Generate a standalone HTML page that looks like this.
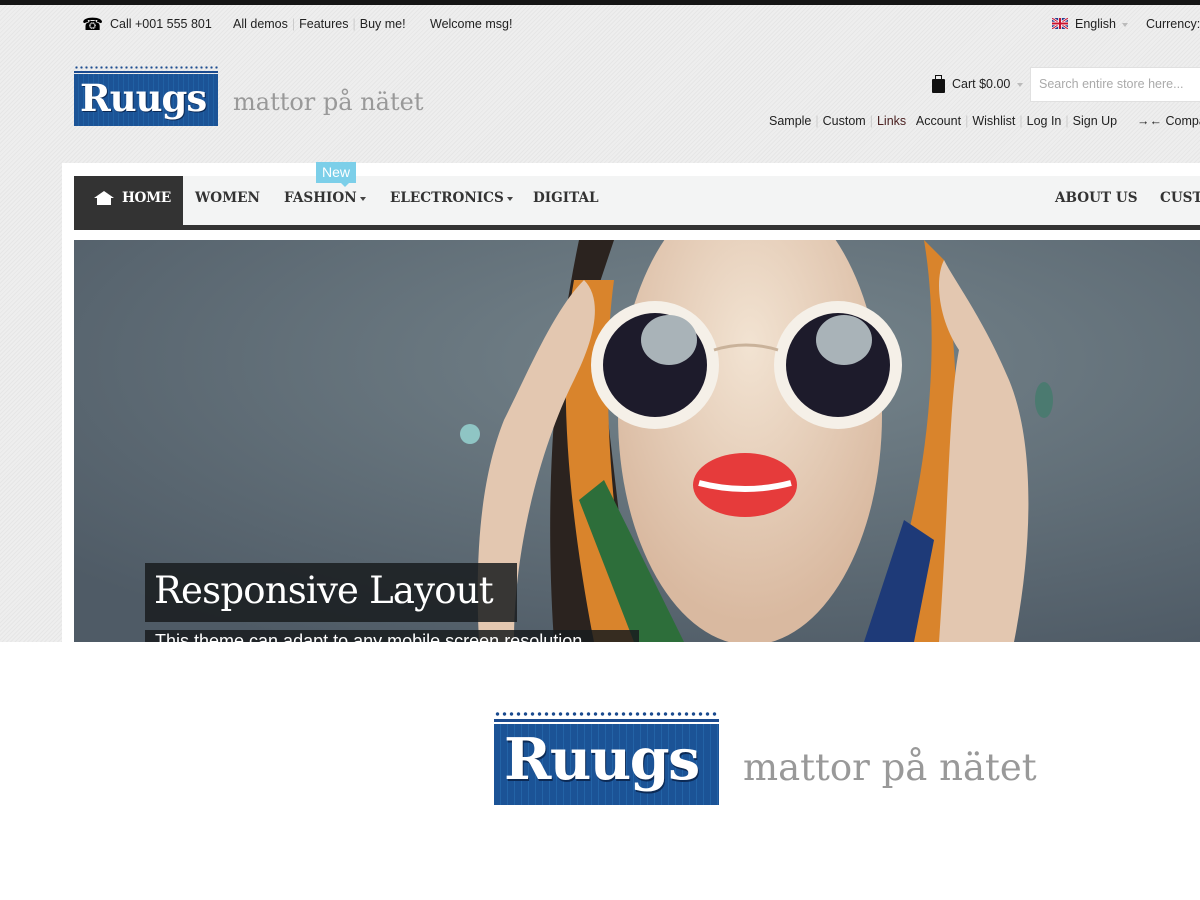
<!DOCTYPE html>
<html><head><meta charset="utf-8"><style>
*{margin:0;padding:0;box-sizing:border-box}
body{width:1200px;height:900px;overflow:hidden;background:#fff;font-family:"Liberation Sans",sans-serif;position:relative}
.a{position:absolute}
.top{left:0;top:0;width:1200px;height:642px;background:#ececec repeating-linear-gradient(135deg,#eeeeee 0 2px,#e6e6e6 2px 3px)}
.bar{left:0;top:0;width:1200px;height:5px;background:#151515}
.t{font-size:12.5px;color:#222;white-space:nowrap}
.sep{color:#ccc;margin:0 4px}
.slab{font-family:"DejaVu Serif","Liberation Serif",serif}
.nav{font-family:"DejaVu Serif",serif;font-size:13.6px;font-weight:bold;color:#333;top:190px;white-space:nowrap}
.caret{display:inline-block;border-left:3.5px solid transparent;border-right:3.5px solid transparent;border-top:4px solid #444;vertical-align:middle;margin-left:3px}
</style></head><body>
<div class="a top"></div>
<div class="a bar"></div>
<div class="a" style="left:82px;top:15px;font-size:17px">☎</div>
<div class="a t" style="left:110px;top:17px">Call +001 555 801</div>
<div class="a t" style="left:233px;top:17px">All demos<span class="sep">|</span>Features<span class="sep">|</span>Buy me!</div>
<div class="a t" style="left:430px;top:17px">Welcome msg!</div>
<svg class="a" style="left:1052px;top:18px" width="16" height="11" viewBox="0 0 16 11"><rect width="16" height="11" fill="#2a3f8f"/><path d="M0 0L16 11M16 0L0 11" stroke="#fff" stroke-width="2.5"/><path d="M0 0L16 11M16 0L0 11" stroke="#c8102e" stroke-width="1"/><path d="M8 0V11M0 5.5H16" stroke="#fff" stroke-width="3.5"/><path d="M8 0V11M0 5.5H16" stroke="#c8102e" stroke-width="2"/></svg>
<div class="a t" style="left:1075px;top:17px">English <span class="caret" style="border-top-color:#bbb"></span></div>
<div class="a t" style="left:1146px;top:17px">Currency:</div>
<div class="a" style="left:74px;top:66px;width:144px;height:3px;background:radial-gradient(circle,#1b4b8f 1px,transparent 1.3px) 0 0/5px 3px"></div>
<div class="a" style="left:74px;top:71px;width:144px;height:2px;background:#1b4b8f"></div>
<div class="a slab" style="left:74px;top:74px;width:144px;height:52px;background:#1a4f91 repeating-linear-gradient(90deg,#1b5396 0 4px,#2060a3 4px 5px);color:#fff;font-size:37px;font-weight:bold;line-height:48px;padding-left:6px;letter-spacing:-1px;text-shadow:1px 1px 0 #0c2a55">Ruugs</div>
<div class="a slab" style="left:233px;top:88px;font-size:24px;color:#999">mattor på nätet</div>
<div class="a" style="left:932px;top:79px;width:13px;height:14px;background:#111;border-radius:1px"></div>
<div class="a" style="left:935px;top:75px;width:7px;height:6px;border:1.5px solid #111;border-bottom:none"></div>
<div class="a t" style="left:952px;top:77px">Cart $0.00 <span class="caret" style="border-top-color:#bbb"></span></div>
<div class="a" style="left:1030px;top:67px;width:180px;height:35px;background:#fff;border:1px solid #e0e0e0"></div>
<div class="a t" style="left:1039px;top:77px;color:#aaa">Search entire store here...</div>
<div class="a t" style="left:769px;top:114px">Sample<span class="sep">|</span>Custom<span class="sep">|</span><span style="color:#4a2020">Links</span> &nbsp; Account<span class="sep">|</span>Wishlist<span class="sep">|</span>Log In<span class="sep">|</span>Sign Up</div>
<div class="a t" style="left:1137px;top:114px"><b>→←</b> Compa</div>
<div class="a" style="left:62px;top:163px;width:1138px;height:479px;background:#fff"></div>
<div class="a" style="left:74px;top:176px;width:1126px;height:49px;background:#f3f4f4"></div>
<div class="a" style="left:74px;top:225px;width:1126px;height:5px;background:#333"></div>
<div class="a" style="left:74px;top:176px;width:109px;height:50px;background:#333"></div>
<svg class="a" style="left:94px;top:191px" width="20" height="14" viewBox="0 0 20 14"><path d="M10 0L20 7H17V14H3V7H0Z" fill="#fff"/></svg>
<div class="a nav" style="left:122px;color:#fff;letter-spacing:-0.3px">HOME</div>
<div class="a nav" style="left:195px">WOMEN</div>
<div class="a nav" style="left:284px">FASHION<span class="caret"></span></div>
<div class="a nav" style="left:390px">ELECTRONICS<span class="caret"></span></div>
<div class="a nav" style="left:533px">DIGITAL</div>
<div class="a nav" style="left:1055px">ABOUT US</div>
<div class="a nav" style="left:1160px">CUST</div>
<div class="a" style="left:316px;top:162px;width:40px;height:21px;background:#7ccfe9;color:#fff;font-size:14px;text-align:center;line-height:21px">New</div>
<div class="a" style="left:341px;top:183px;border-left:4px solid transparent;border-right:4px solid transparent;border-top:4px solid #7ccfe9"></div>
<svg class="a" style="left:74px;top:240px" width="1126" height="402" viewBox="0 0 1126 402">
<defs><radialGradient id="bg" cx="0.6" cy="0.3" r="0.8"><stop offset="0" stop-color="#76858c"/><stop offset="1" stop-color="#4f5b66"/></radialGradient>
<radialGradient id="sk" cx="0.5" cy="0.35" r="0.6"><stop offset="0" stop-color="#f2e3d2"/><stop offset="1" stop-color="#d9b9a0"/></radialGradient></defs>
<rect width="1126" height="402" fill="url(#bg)"/>
<path d="M505 0C480 120 470 250 480 402H560L520 60 540 0Z" fill="#2b231f"/>
<path d="M500 40C480 150 500 300 520 402H870C885 300 890 150 870 20L850 0C870 120 850 280 800 402L560 402C540 300 525 150 540 40Z" fill="#d9842c"/>
<path d="M505 260L560 402H610L530 240Z" fill="#2d6e3a"/><path d="M830 280L790 402H840L860 300Z" fill="#1e3a78"/>
<ellipse cx="676" cy="175" rx="132" ry="230" fill="url(#sk)"/>
<path d="M440 402C440 300 470 200 500 140C520 100 530 60 510 40C480 70 455 130 430 180C410 230 400 300 405 402Z" fill="#e3c7b0"/>
<path d="M940 402C960 300 960 200 935 140C910 80 880 40 870 20C860 40 865 80 885 110C875 160 875 260 865 402Z" fill="#e3c7b0"/>
<circle cx="581" cy="125" r="64" fill="#f5f0e8"/><circle cx="581" cy="125" r="52" fill="#1d1b2b"/><ellipse cx="595" cy="100" rx="28" ry="25" fill="#a9b3b8"/>
<circle cx="764" cy="125" r="64" fill="#f5f0e8"/><circle cx="764" cy="125" r="52" fill="#1d1b2b"/><ellipse cx="770" cy="100" rx="28" ry="25" fill="#a9b3b8"/>
<path d="M640 110Q672 100 704 110" stroke="#c9b29a" stroke-width="3" fill="none"/>
<ellipse cx="671" cy="245" rx="52" ry="32" fill="#e63b3b"/><path d="M625 243Q671 255 717 243" stroke="#fff" stroke-width="6" fill="none"/>
<circle cx="396" cy="194" r="10" fill="#8fc5c4"/><ellipse cx="970" cy="160" rx="9" ry="18" fill="#4b7a70"/>
</svg>
<div class="a" style="left:145px;top:563px;width:372px;height:59px;background:rgba(25,28,30,0.85)"></div>
<div class="a slab" style="left:154px;top:569px;color:#fff;font-size:37px;letter-spacing:-0.8px">Responsive Layout</div>
<div class="a" style="left:145px;top:630px;width:494px;height:12px;background:rgba(25,28,30,0.85);overflow:hidden"><div style="color:#fff;font-size:18px;padding-left:10px;line-height:30px;margin-top:-4px">This theme can adapt to any mobile screen resolution</div></div>
<div class="a" style="left:494px;top:712px;width:225px;height:4px;background:radial-gradient(circle,#1b4b8f 1.6px,transparent 1.9px) 0 0/7px 4px"></div>
<div class="a" style="left:494px;top:719px;width:225px;height:3px;background:#1b4b8f"></div>
<div class="a slab" style="left:494px;top:724px;width:225px;height:81px;background:#1a4f91 repeating-linear-gradient(90deg,#1b5396 0 6px,#2363a6 6px 7px);color:#fff;font-size:57px;font-weight:bold;line-height:72px;padding-left:10px;letter-spacing:-1.5px;text-shadow:1px 2px 0 #0c2a55">Ruugs</div>
<div class="a slab" style="left:743px;top:746px;font-size:37px;color:#999">mattor på nätet</div>
</body></html>
